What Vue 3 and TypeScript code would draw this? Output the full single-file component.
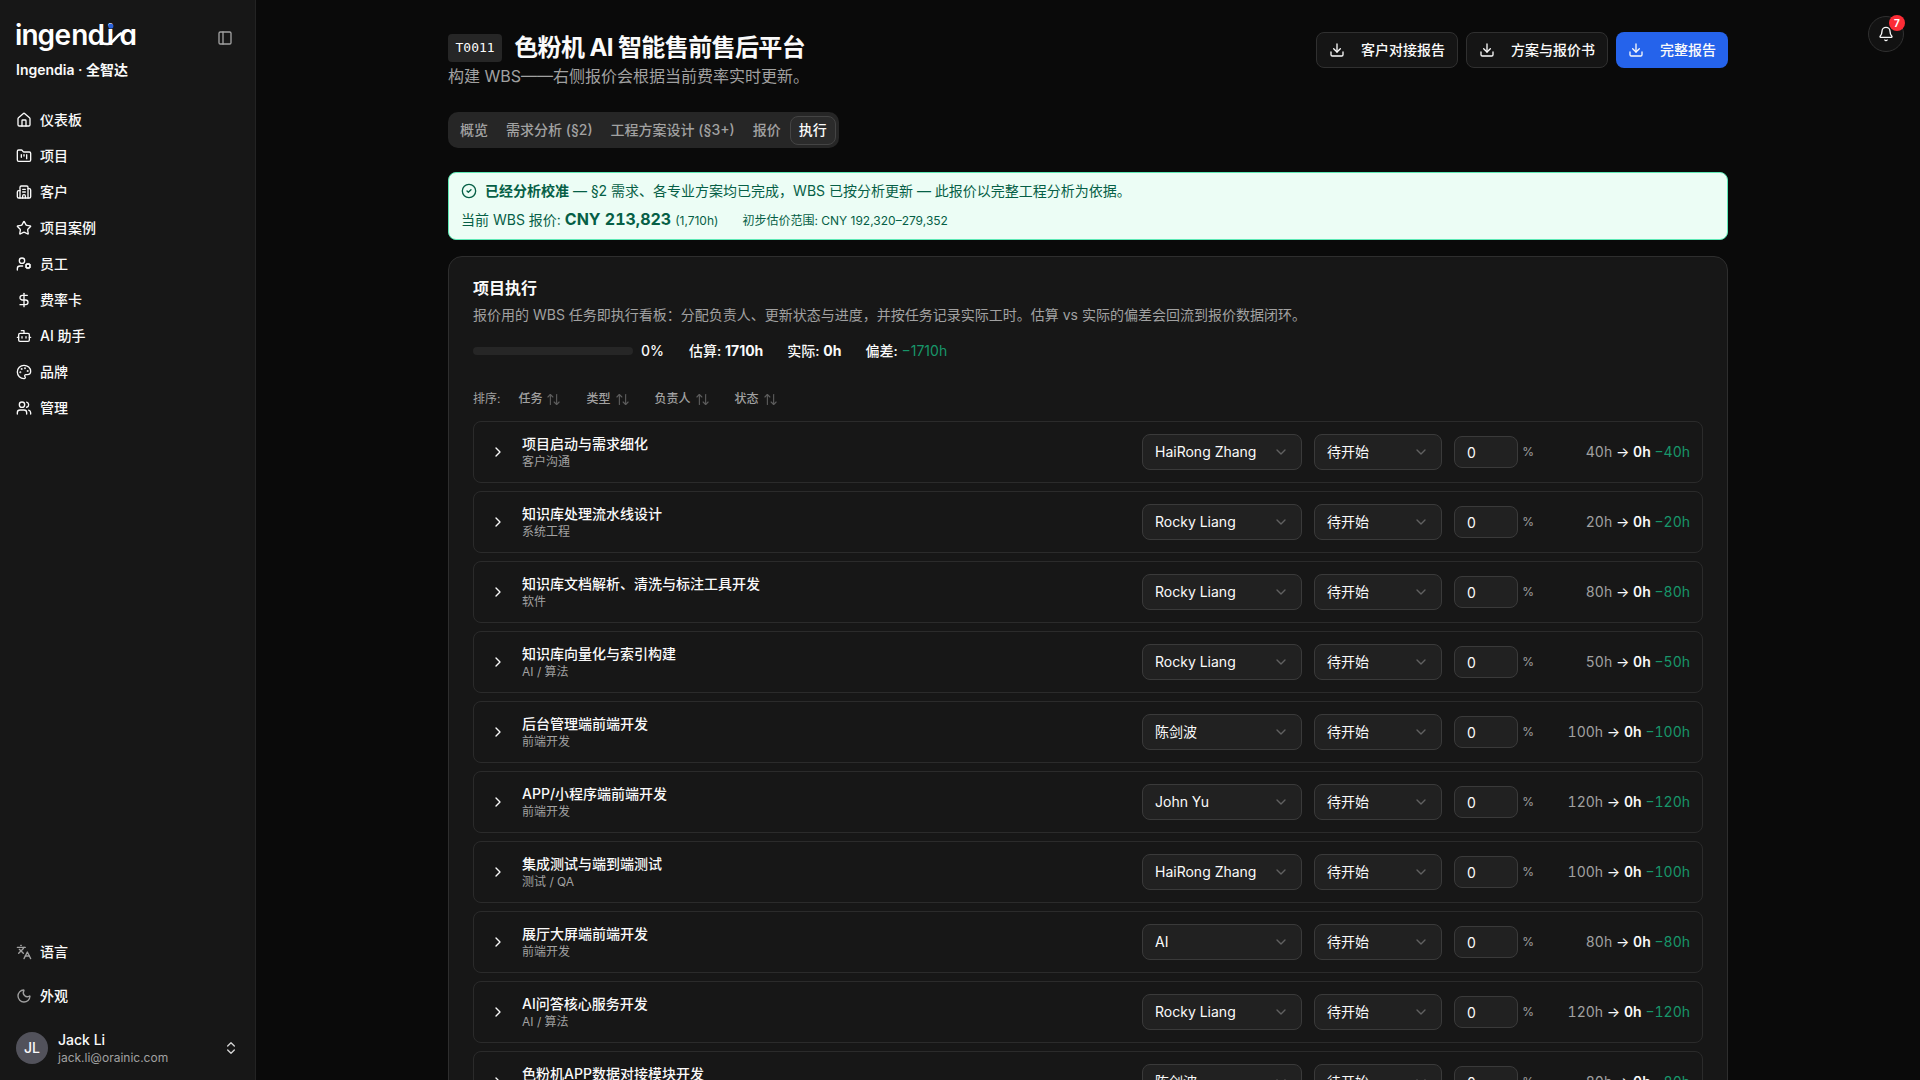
<script setup lang="ts">
interface NavItem { label: string; icon: string }
interface Task { title: string; type: string; owner: string; hours: number }

const nav: NavItem[] = [
  { label: '仪表板', icon: '<path d="M15 21v-8a1 1 0 0 0-1-1h-4a1 1 0 0 0-1 1v8"/><path d="M3 10a2 2 0 0 1 .709-1.528l7-5.999a2 2 0 0 1 2.582 0l7 5.999A2 2 0 0 1 21 10v9a2 2 0 0 1-2 2H5a2 2 0 0 1-2-2z"/>' },
  { label: '项目', icon: '<path d="M4 20h16a2 2 0 0 0 2-2V8a2 2 0 0 0-2-2h-7.93a2 2 0 0 1-1.66-.9l-.82-1.2A2 2 0 0 0 7.93 3H4a2 2 0 0 0-2 2v13c0 1.1.9 2 2 2Z"/><path d="M8 10v4"/><path d="M12 10v2"/><path d="M16 10v6"/>' },
  { label: '客户', icon: '<path d="M10 12h4"/><path d="M10 8h4"/><path d="M14 21v-3a2 2 0 0 0-4 0v3"/><path d="M6 10H4a2 2 0 0 0-2 2v7a2 2 0 0 0 2 2h16a2 2 0 0 0 2-2V9a2 2 0 0 0-2-2h-2"/><path d="M6 21V5a2 2 0 0 1 2-2h8a2 2 0 0 1 2 2v16"/>' },
  { label: '项目案例', icon: '<path d="M11.525 2.295a.53.53 0 0 1 .95 0l2.31 4.679a2.123 2.123 0 0 0 1.595 1.16l5.166.756a.53.53 0 0 1 .294.904l-3.736 3.638a2.123 2.123 0 0 0-.611 1.878l.882 5.14a.53.53 0 0 1-.771.56l-4.618-2.428a2.122 2.122 0 0 0-1.973 0L6.396 21.01a.53.53 0 0 1-.77-.56l.881-5.139a2.122 2.122 0 0 0-.611-1.879L2.16 9.795a.53.53 0 0 1 .294-.906l5.165-.755a2.122 2.122 0 0 0 1.597-1.16z"/>' },
  { label: '员工', icon: '<path d="M10 15H6a4 4 0 0 0-4 4v2"/><circle cx="9" cy="7" r="4"/><circle cx="18" cy="15" r="3"/><path d="m14.305 16.53.923-.382"/><path d="m15.228 13.852-.923-.383"/><path d="m16.852 12.228-.383-.923"/><path d="m16.852 17.772-.383.924"/><path d="m19.148 12.228.383-.923"/><path d="m19.53 18.696-.382-.924"/><path d="m20.772 13.852.924-.383"/><path d="m20.772 16.148.924.383"/>' },
  { label: '费率卡', icon: '<path d="M12 2v20"/><path d="M17 5H9.5a3.5 3.5 0 0 0 0 7h5a3.5 3.5 0 0 1 0 7H6"/>' },
  { label: 'AI 助手', icon: '<path d="M12 8V4H8"/><rect width="16" height="12" x="4" y="8" rx="2"/><path d="M2 14h2"/><path d="M20 14h2"/><path d="M15 13v2"/><path d="M9 13v2"/>' },
  { label: '品牌', icon: '<path d="M12 22a1 1 0 0 1 0-20 10 9 0 0 1 10 9 5 5 0 0 1-5 5h-2.25a1.75 1.75 0 0 0-1.4 2.8l.3.4a1.75 1.75 0 0 1-1.4 2.8z"/><circle cx="13.5" cy="6.5" r=".5" fill="currentColor"/><circle cx="17.5" cy="10.5" r=".5" fill="currentColor"/><circle cx="6.5" cy="12.5" r=".5" fill="currentColor"/><circle cx="8.5" cy="7.5" r=".5" fill="currentColor"/>' },
  { label: '管理', icon: '<path d="M16 21v-2a4 4 0 0 0-4-4H6a4 4 0 0 0-4 4v2"/><path d="M16 3.128a4 4 0 0 1 0 7.744"/><path d="M22 21v-2a4 4 0 0 0-3-3.87"/><circle cx="9" cy="7" r="4"/>' },
]

const prefs: NavItem[] = [
  { label: '语言', icon: '<path d="m5 8 6 6"/><path d="m4 14 6-6 2-3"/><path d="M2 5h12"/><path d="M7 2h1"/><path d="m22 22-5-10-5 10"/><path d="M14 18h6"/>' },
  { label: '外观', icon: '<path d="M20.985 12.486a9 9 0 1 1-9.473-9.472c.405-.022.617.46.402.803a6 6 0 0 0 8.268 8.268c.344-.215.825-.004.803.401"/>' },
]

const reports = ['客户对接报告', '方案与报价书', '完整报告']
const tabs = ['概览', '需求分析 (§2)', '工程方案设计 (§3+)', '报价', '执行']
const sorts = ['任务', '类型', '负责人', '状态']

const tasks: Task[] = [
  { title: '项目启动与需求细化', type: '客户沟通', owner: 'HaiRong Zhang', hours: 40 },
  { title: '知识库处理流水线设计', type: '系统工程', owner: 'Rocky Liang', hours: 20 },
  { title: '知识库文档解析、清洗与标注工具开发', type: '软件', owner: 'Rocky Liang', hours: 80 },
  { title: '知识库向量化与索引构建', type: 'AI / 算法', owner: 'Rocky Liang', hours: 50 },
  { title: '后台管理端前端开发', type: '前端开发', owner: '陈剑波', hours: 100 },
  { title: 'APP/小程序端前端开发', type: '前端开发', owner: 'John Yu', hours: 120 },
  { title: '集成测试与端到端测试', type: '测试 / QA', owner: 'HaiRong Zhang', hours: 100 },
  { title: '展厅大屏端前端开发', type: '前端开发', owner: 'AI', hours: 80 },
  { title: 'AI问答核心服务开发', type: 'AI / 算法', owner: 'Rocky Liang', hours: 120 },
  { title: '色粉机APP数据对接模块开发', type: '软件', owner: '陈剑波', hours: 80 },
]
</script>

<template>
  <div class="app">
    <aside class="sidebar">
      <div class="brand">
        <svg class="logo" width="124" height="36" viewBox="0 0 124 36" role="img" aria-label="ingendia">
          <text x="-1 5.6 21.4 38.4 55.2 71.600 90.800 103.4" y="25">ingendia</text>
          <path d="M86.500 23q1.500 1.300 5.500 1c5.400-.700 7.400-7.500 13-10.500" />
          <circle cx="94.8" cy="6" r="2.600" />
        </svg>
        <svg class="icon toggle" viewBox="0 0 24 24"><rect width="18" height="18" x="3" y="3" rx="2" /><path d="M9 3v18" /></svg>
      </div>
      <div class="company">Ingendia · 全智达</div>
      <nav class="nav">
        <a v-for="item in nav" :key="item.label" class="nav-item">
          <svg class="icon" viewBox="0 0 24 24" v-html="item.icon"></svg>
          <span>{{ item.label }}</span>
        </a>
      </nav>
      <div class="prefs">
        <a v-for="item in prefs" :key="item.label" class="nav-item pref">
          <svg class="icon" viewBox="0 0 24 24" v-html="item.icon"></svg>
          <span>{{ item.label }}</span>
        </a>
      </div>
      <div class="user">
        <span class="avatar">JL</span>
        <span class="user-text"><b>Jack Li</b><small>jack.li@orainic.com</small></span>
        <svg class="icon" viewBox="0 0 24 24"><path d="m7 15 5 5 5-5" /><path d="m7 9 5-5 5 5" /></svg>
      </div>
    </aside>

    <main class="main">
      <button class="bell">
        <svg class="icon" viewBox="0 0 24 24"><path d="M10.268 21a2 2 0 0 0 3.464 0" /><path d="M3.262 15.326A1 1 0 0 0 4 17h16a1 1 0 0 0 .74-1.673C19.41 13.956 18 12.499 18 8A6 6 0 0 0 6 8c0 4.499-1.411 5.956-2.738 7.326" /></svg>
        <span class="count">7</span>
      </button>

      <div class="content">
        <header class="head">
          <div>
            <div class="title-row"><span class="code">T0011</span><h1>色粉机 AI 智能售前售后平台</h1></div>
            <p class="subtitle">构建 WBS——右侧报价会根据当前费率实时更新。</p>
          </div>
          <div class="actions">
            <button v-for="(r, i) in reports" :key="r" class="action" :class="{ primary: i === 2 }">
              <svg class="icon" viewBox="0 0 24 24"><path d="M12 15V3" /><path d="M21 15v4a2 2 0 0 1-2 2H5a2 2 0 0 1-2-2v-4" /><path d="m7 10 5 5 5-5" /></svg>
              <span>{{ r }}</span>
            </button>
          </div>
        </header>

        <div class="tabs">
          <button v-for="(t, i) in tabs" :key="t" class="tab" :class="{ active: i === 4 }">{{ t }}</button>
        </div>

        <section class="banner">
          <div class="banner-line">
            <svg class="icon" viewBox="0 0 24 24"><circle cx="12" cy="12" r="10" /><path d="m9 12 2 2 4-4" /></svg>
            <span><b>已经分析校准</b> — §2 需求、各专业方案均已完成，WBS 已按分析更新 — 此报价以完整工程分析为依据。</span>
          </div>
          <div class="banner-line quote">
            <span>当前 WBS 报价: <strong>CNY 213,823</strong> <small>(1,710h)</small></span>
            <small>初步估价范围: CNY 192,320–279,352</small>
          </div>
        </section>

        <section class="card">
          <h2>项目执行</h2>
          <p class="desc">报价用的 WBS 任务即执行看板：分配负责人、更新状态与进度，并按任务记录实际工时。估算 vs 实际的偏差会回流到报价数据闭环。</p>
          <div class="stats">
            <div class="progress"><span class="bar"></span><span class="pct">0%</span></div>
            <span>估算: <b>1710h</b></span>
            <span>实际: <b>0h</b></span>
            <span>偏差: <i>−1710h</i></span>
          </div>
          <div class="sorts">
            <span class="sort-label">排序:</span>
            <button v-for="s in sorts" :key="s" class="sort">
              {{ s }}
              <svg class="icon" viewBox="0 0 24 24"><path d="m3 8 4-4 4 4" /><path d="M7 4v16" /><path d="m21 16-4 4-4-4" /><path d="M17 20V4" /></svg>
            </button>
          </div>
          <div class="tasks">
            <div v-for="t in tasks" :key="t.title" class="task">
              <span class="expander"><svg class="icon" viewBox="0 0 24 24"><path d="m9 18 6-6-6-6" /></svg></span>
              <div class="task-name"><b>{{ t.title }}</b><small>{{ t.type }}</small></div>
              <div class="select owner"><span>{{ t.owner }}</span><svg class="icon" viewBox="0 0 24 24"><path d="m6 9 6 6 6-6" /></svg></div>
              <div class="select status"><span>待开始</span><svg class="icon" viewBox="0 0 24 24"><path d="m6 9 6 6 6-6" /></svg></div>
              <div class="percent"><span class="input">0</span><small>%</small></div>
              <div class="hours"><span>{{ t.hours }}h</span> → <b>0h</b> <i>−{{ t.hours }}h</i></div>
            </div>
          </div>
        </section>
      </div>
    </main>
  </div>
</template>

<style>
html, body { background: #0a0a0a; overflow: hidden; }
</style>

<style scoped>
* { box-sizing: border-box; }
.app { display: flex; width: 100%; height: 1080px; overflow: hidden; background: #0a0a0a; color: #fafafa; font: 400 14px/20px Inter, "Noto Sans CJK SC", sans-serif; }
button { font: inherit; color: inherit; border: 0; background: none; padding: 0; }
h1, h2, p { margin: 0; }
i { font-style: normal; color: #17966a; }
.icon { display: block; flex: none; width: 16px; height: 16px; fill: none; stroke: currentColor; stroke-width: 2; stroke-linecap: round; stroke-linejoin: round; }

.sidebar { display: flex; flex-direction: column; flex: none; width: 256px; height: 100%; background: #171717; border-right: 1px solid #232323; }
.brand { display: flex; align-items: center; justify-content: space-between; height: 36px; margin: 20px 22px 0 16px; }
.logo { overflow: visible; }
.logo text { font: 600 28px Inter, sans-serif; font-feature-settings: "cv11"; fill: #fff; }
.logo path { fill: none; stroke: #fff; stroke-width: 2.6; stroke-linecap: round; }
.logo circle { fill: #2b62d9; }
.toggle { color: #a1a1a1; }
.company { margin: 4px 0 0 16px; font-weight: 600; }
.nav { display: flex; flex-direction: column; gap: 4px; margin: 24px 8px 0; }
.nav-item { display: flex; align-items: center; gap: 8px; height: 32px; padding: 0 8px; font-weight: 500; }
.prefs { display: flex; flex-direction: column; gap: 12px; margin: auto 8px 0; }
.pref .icon { color: #a1a1a1; }
.user { display: flex; align-items: center; height: 48px; margin: 12px 16px 8px; }
.avatar { width: 32px; height: 32px; border-radius: 50%; background: #52525b; font-weight: 500; line-height: 32px; text-align: center; }
.user-text { display: flex; flex-direction: column; flex: 1; margin-left: 10px; line-height: 18px; }
.user-text b { margin: 1px 0 -1px; font-weight: 500; }
.user-text small { margin: 1px 0 -1px; font-size: 12px; color: #a1a1a1; }
.user .icon { color: #d4d4d4; }

.main { position: relative; flex: 1; min-width: 0; }
.bell { position: absolute; top: 16px; right: 16px; display: grid; place-items: center; width: 36px; height: 36px; border: 1px solid #303030; border-radius: 50%; background: #121212; }
.count { position: absolute; top: -2px; right: -2px; width: 16px; height: 16px; border-radius: 8px; background: #fb2c36; color: #fff; font-size: 10px; font-weight: 700; line-height: 16px; text-align: center; }
.content { width: 1280px; margin: 0 auto; padding-top: 32px; }
.head { display: flex; justify-content: space-between; align-items: flex-start; height: 56px; }
.title-row { display: flex; align-items: center; gap: 12px; height: 32px; }
.code { height: 28px; padding: 0 7.5px; border-radius: 4px; background: #262626; font: 400 13px/28px "DejaVu Sans Mono", monospace; }
h1 { font-size: 24px; line-height: 32px; font-weight: 700; letter-spacing: -0.6px; }
.subtitle { font-size: 16px; line-height: 24px; color: #a1a1a1; }
.actions { display: flex; gap: 8px; }
.action { display: flex; align-items: center; gap: 16px; height: 36px; padding: 0 12px; border: 1px solid #303030; border-radius: 8px; background: #151515; font-weight: 500; }
.action.primary { border: 0; background: #2563eb; }
.tabs { display: flex; align-items: center; width: fit-content; height: 36px; margin-top: 24px; padding: 3px; border-radius: 10px; background: #262626; }
.tab { height: 29px; padding: 0 8px; border: 1px solid transparent; border-radius: 8px; font-weight: 500; color: #a1a1a1; }
.tab.active { background: #2b2b2b; border-color: #444; color: #fafafa; }

.banner { height: 68px; margin-top: 24px; padding: 8px 12px; border: 1px solid #5ee9b5; border-radius: 8px; background: #ecfdf5; color: #065f46; }
.banner-line { display: flex; align-items: center; gap: 8px; }
.banner-line b { font-weight: 600; }
.quote { align-items: baseline; gap: 24px; margin-top: 6px; line-height: 24px; }
.quote strong { font-size: 16px; font-weight: 700; font-variant-numeric: tabular-nums; }
.quote small { font-size: 12px; }

.card { margin-top: 16px; height: 900px; padding: 23px 24px 24px; border: 1px solid #2e2e2e; border-radius: 14px; background: #171717; }
h2 { font-size: 16px; line-height: 16px; font-weight: 600; }
.desc { margin-top: 9px; color: #a1a1a1; }
.stats { display: flex; align-items: center; gap: 24px; margin-top: 16px; font-weight: 500; }
.stats b { font-weight: 700; }
.stats i { font-weight: 400; }
.pct { margin-right: 1px; font-variant-numeric: tabular-nums; }
.progress { display: flex; align-items: center; gap: 8px; }
.bar { width: 160px; height: 8px; border-radius: 4px; background: #262626; }
.sorts { display: flex; align-items: center; gap: 25px; height: 32px; margin-top: 22px; font-size: 12px; color: #a1a1a1; }
.sort-label { margin-right: -7px; }
.sort { display: flex; align-items: center; gap: 4px; font-weight: 500; }
.sort .icon { width: 15px; height: 15px; opacity: .5; stroke-width: 1.8; }
.tasks { display: flex; flex-direction: column; gap: 8px; margin-top: 6px; }
.task { display: flex; align-items: center; gap: 12px; height: 62px; padding: 12px; border: 1px solid #2b2b2b; border-radius: 8px; }
.expander { display: grid; place-items: center; width: 24px; height: 24px; }
.task-name { display: flex; flex-direction: column; flex: 1; }
.task-name b { font-weight: 500; }
.task-name small { font-size: 12px; line-height: 16px; color: #a1a1a1; }
.select { display: flex; align-items: center; justify-content: space-between; height: 36px; padding: 0 12px; border: 1px solid #3a3a3a; border-radius: 8px; background: #212121; }
.select .icon { color: #a1a1a1; opacity: .5; }
.owner { width: 160px; }
.status { width: 128px; }
.percent { display: flex; align-items: center; gap: 4.5px; width: 80px; }
.percent small { font-size: 12px; color: #a1a1a1; }
.input { width: 64px; height: 32px; padding: 1px 12px 0; border: 1px solid #3a3a3a; border-radius: 8px; background: #212121; line-height: 30px; }
.hours { width: 144px; text-align: right; font-variant-numeric: tabular-nums; }
.hours span { color: #a1a1a1; }
.hours b { font-weight: 600; }
</style>
